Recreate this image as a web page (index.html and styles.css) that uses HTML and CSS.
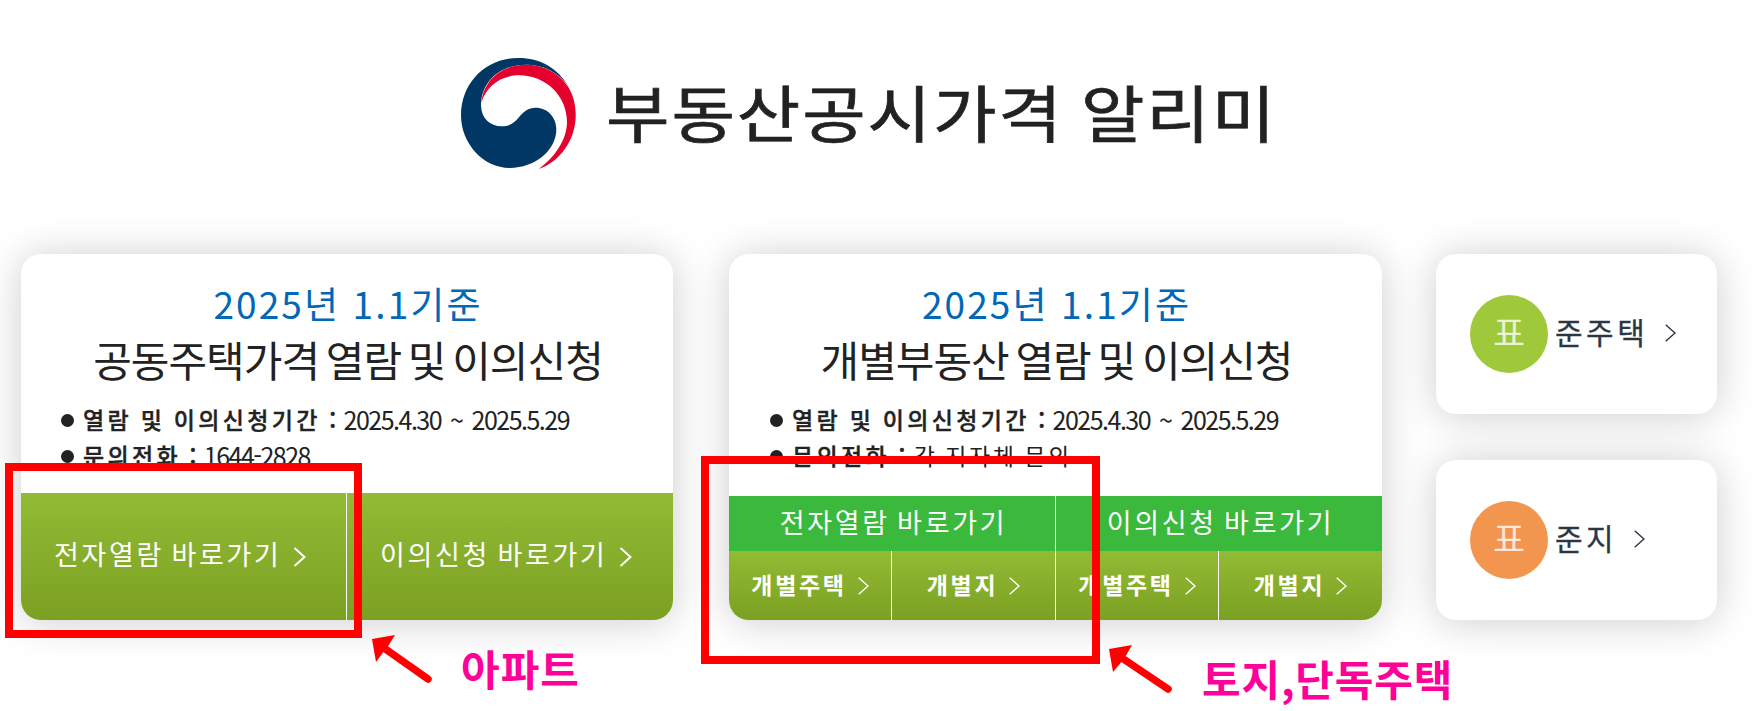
FILE: index.html
```html
<!DOCTYPE html>
<html lang="ko">
<head>
<meta charset="utf-8">
<title>부동산공시가격 알리미</title>
<link rel="stylesheet" href="styles.css">
</head>
<body>
<header class="header">
  <svg class="logo" viewBox="60 50 351 339">
    <path fill="#003764" d="M63 225C63 130 135 53 235 53C300 53 352 82 387 140C355 95 310 73 258 73C185 73 124 120 123 195C124 235 150 258 185 258C208 258 222 248 235 233C250 213 265 202 287 202C322 202 349 230 349 267C349 330 285 383 209 383C130 383 63 310 63 225Z"/>
    <path fill="#e6002d" d="M124 187C130 120 185 73 258 73C318 73 358 102 385 140C400 165 408 195 407 230C405 300 360 365 296 386C345 350 380 300 381 245C381 165 315 105 238 105C185 105 140 135 124 187Z"/>
  </svg>
  <h1 class="title">부동산공시가격 알리미</h1>
</header>

<main class="cards">
  <section class="card card-house">
    <p class="year">2025년 1.1기준</p>
    <h2 class="name">공동주택가격 열람 및 이의신청</h2>
    <ul class="info">
      <li><b>열람 및 이의신청기간 :</b><span class="num">2025.4.30 ~ 2025.5.29</span></li>
      <li><b>문의전화 :</b><span class="num">1644-2828</span></li>
    </ul>
    <nav class="actions">
      <a class="action">전자열람 바로가기<svg class="chev" viewBox="0 0 12 20"><path d="M1 1L11 10L1 19"/></svg></a>
      <a class="action">이의신청 바로가기<svg class="chev" viewBox="0 0 12 20"><path d="M1 1L11 10L1 19"/></svg></a>
    </nav>
  </section>

  <section class="card card-land">
    <p class="year">2025년 1.1기준</p>
    <h2 class="name">개별부동산 열람 및 이의신청</h2>
    <ul class="info">
      <li><b>열람 및 이의신청기간 :</b><span class="num">2025.4.30 ~ 2025.5.29</span></li>
      <li><b>문의전화 :</b><span class="txt">각 지자체 문의</span></li>
    </ul>
    <nav class="groups">
      <div class="group">
        <div class="group-title">전자열람 바로가기</div>
        <div class="group-links">
          <a class="sub">개별주택<svg class="chev-s" viewBox="0 0 11 18"><path d="M.7 .7L10 9L.7 17.3"/></svg></a>
          <a class="sub">개별지<svg class="chev-s" viewBox="0 0 11 18"><path d="M.7 .7L10 9L.7 17.3"/></svg></a>
        </div>
      </div>
      <div class="group">
        <div class="group-title">이의신청 바로가기</div>
        <div class="group-links">
          <a class="sub">개별주택<svg class="chev-s" viewBox="0 0 11 18"><path d="M.7 .7L10 9L.7 17.3"/></svg></a>
          <a class="sub">개별지<svg class="chev-s" viewBox="0 0 11 18"><path d="M.7 .7L10 9L.7 17.3"/></svg></a>
        </div>
      </div>
    </nav>
  </section>

  <aside class="side">
    <a class="mini"><span class="badge green">표</span><span class="mini-label">준주택</span><svg class="chev-s" viewBox="0 0 11 18"><path d="M.7 .7L10 9L.7 17.3"/></svg></a>
    <a class="mini"><span class="badge orange">표</span><span class="mini-label">준지</span><svg class="chev-s" viewBox="0 0 11 18"><path d="M.7 .7L10 9L.7 17.3"/></svg></a>
  </aside>
</main>

<div class="mark mark-a"></div>
<div class="mark mark-b"></div>
<svg class="arrow arrow-a" viewBox="0 0 64 50"><path d="M0 4L23 0L16.500 10.500L11 17.500L4 27Z" fill="#f00"/><path d="M12 13L56 44" stroke="#f00" stroke-width="7.500" stroke-linecap="round"/></svg>
<svg class="arrow arrow-b" viewBox="0 0 64 50"><path d="M0 4L23 0L17 10.500L12 17.500L4 27Z" fill="#f00"/><path d="M13 13L59 44" stroke="#f00" stroke-width="7.500" stroke-linecap="round"/></svg>
<div class="note note-a">아파트</div>
<div class="note note-b">토지,단독주택</div>
</body>
</html>
```

FILE: styles.css
```css
* { box-sizing: border-box; margin: 0; padding: 0; }
body {
  position: relative;
  width: 1752px;
  height: 711px;
  overflow: hidden;
  background: #fff;
  color: #222;
  font-family: "Noto Sans CJK KR", sans-serif;
  white-space: nowrap;
}
.header { display: flex; height: 254px; padding: 57px 0 0 460px; }
.logo { width: 117px; height: 113px; }
.title {
  height: 100px;
  margin: 4px 0 0 29px;
  font-size: 69px;
  line-height: 100px;
  font-weight: 400;
  letter-spacing: 1.9px;
  word-spacing: -4px;
  -webkit-text-stroke: .8px #222;
  transform: scaleY(.9);
}
.cards { display: flex; height: 366px; padding-left: 21px; }
.card, .mini { background: #fff; border-radius: 20px; box-shadow: 0 2px 40px rgba(0, 0, 0, .2); }
.card { display: flex; flex-direction: column; height: 366px; padding-top: 22px; overflow: hidden; }
.card-house { width: 652px; margin-right: 56px; }
.card-land { width: 653px; margin-right: 54px; }
.year { padding-left: 2px; text-align: center; font-size: 37px; line-height: 55px; letter-spacing: 2.1px; color: #0068b7; }
.name { padding-left: 2px; text-align: center; font-size: 42px; line-height: 55px; font-weight: 400; letter-spacing: -1px; word-spacing: -4px; }
.info { margin-top: 15px; padding-left: 40px; list-style: none; font-size: 23px; line-height: 36px; }
.info li { display: flex; align-items: center; height: 36px; }
.card-land .info { padding-left: 41px; }
.info li::before { content: ""; width: 13px; height: 13px; margin: 2px 9px 0 0; border-radius: 50%; background: #222; }
.info b { font-weight: 500; letter-spacing: 3.3px; word-spacing: -1px; -webkit-text-stroke: .4px #222; }
.info .num { font-size: 25px; letter-spacing: -1.5px; word-spacing: 3.5px; margin-left: 4px; }
.info .txt { margin-left: 5px; letter-spacing: 2.5px; word-spacing: -1px; }
.actions { display: flex; height: 127px; margin-top: auto; }
.action, .sub { background: linear-gradient(#92bb35, #7ca022); color: #fff; }
.action { display: flex; flex: 1; align-items: center; padding: 0 0 6px 33px; font-size: 27px; letter-spacing: 2.7px; word-spacing: -3px; }
.action:first-child { flex: 0 0 325px; }
.action + .action, .group + .group, .sub + .sub { border-left: 1px solid #fff; }
.chev { width: 13px; height: 20px; margin: 6px 0 0 11px; fill: none; stroke: currentColor; stroke-width: 2; }
.chev-s { width: 11px; height: 18px; fill: none; stroke: currentColor; stroke-width: 1.4; }
.groups { display: flex; height: 124px; margin-top: auto; }
.group { flex: 1; }
.group:first-child { flex: 0 0 326px; }
.group-title { height: 55px; padding-left: 3px; line-height: 52px; background: #3ab93d; color: #fff; font-size: 27px; letter-spacing: 2.7px; word-spacing: -3px; text-align: center; }
.group-links { display: flex; height: 69px; }
.sub { display: flex; flex: 1; align-items: center; justify-content: center; padding-bottom: 4px; font-size: 23px; font-weight: 700; letter-spacing: 2.7px; }
.sub:first-child { flex: 0 0 162px; }
.sub .chev-s { margin: 4px 0 0 11px; }
.side { display: flex; flex-direction: column; gap: 46px; width: 281px; }
.mini { display: flex; align-items: center; height: 160px; padding-left: 34px; color: #2b3544; }
.badge { width: 78px; height: 78px; border-radius: 50%; color: rgba(255, 255, 255, .78); font-size: 35px; line-height: 71px; text-align: center; }
.green { background: #9fc93a; }
.orange { background: #f2954e; }
.mini-label { margin: -6px 0 0 7px; font-size: 30px; letter-spacing: 3.5px; -webkit-text-stroke: .3px #2b3544; }
.mini .chev-s { margin: -3px 0 0 17px; }
.mark { position: absolute; border: 8px solid #f00; }
.mark-a { left: 5px; top: 463px; width: 357px; height: 175px; }
.mark-b { left: 701px; top: 456px; width: 399px; height: 208px; }
.arrow { position: absolute; width: 64px; height: 50px; fill: none; }
.arrow-a { left: 372px; top: 635px; }
.arrow-b { left: 1109px; top: 645px; }
.note { position: absolute; font-size: 42px; line-height: 60px; font-weight: 700; color: #f09; }
.note-a { left: 461px; top: 638px; letter-spacing: 1px; }
.note-b { left: 1202px; top: 648px; letter-spacing: .8px; }
```
